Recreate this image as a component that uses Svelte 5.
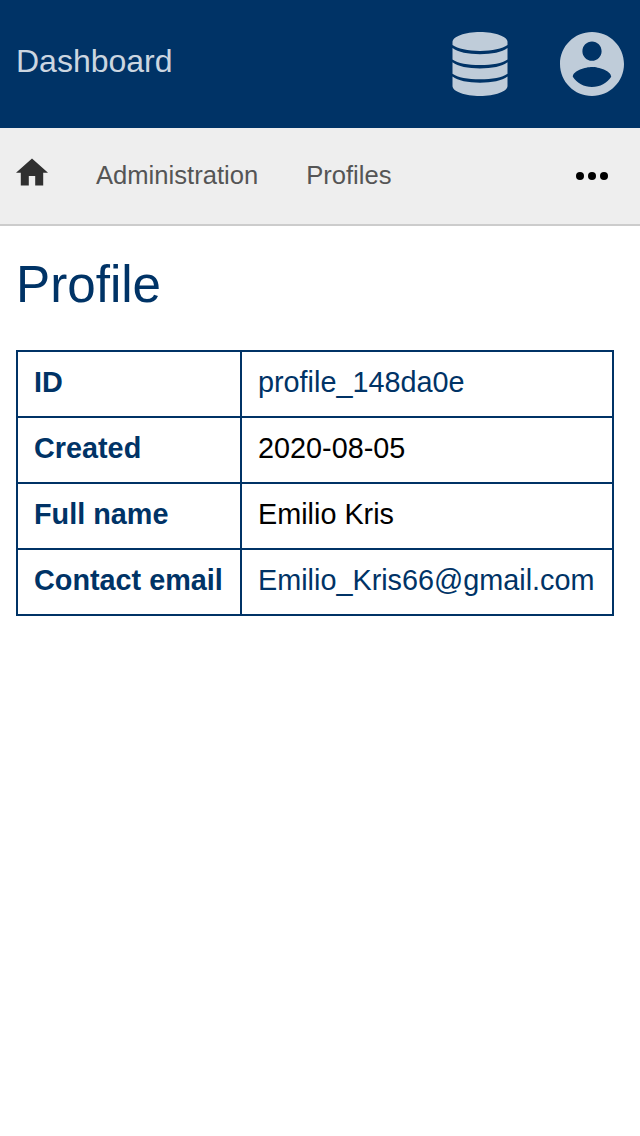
<script>
  const crumbs = ['Administration', 'Profiles'];
  const rows = [
    { label: 'ID', value: 'profile_148da0e', link: true },
    { label: 'Created', value: '2020-08-05' },
    { label: 'Full name', value: 'Emilio Kris' },
    { label: 'Contact email', value: 'Emilio_Kris66@gmail.com', link: true }
  ];
</script>

<header>
  <span class="brand">Dashboard</span>
  <div class="tools">
    <svg width="64" height="64" viewBox="0 0 64 64" aria-hidden="true">
      <path d="M4.500 10C4.500 4.500 17 0 32 0s27.500 4.500 27.500 10v3C54.500 16.800 44 18.900 32 18.900S9.500 16.800 4.500 13z" />
      <path d="M4.500 16C10 20.300 20 22.200 32 22.200s22-1.900 27.500-6.200v11.400C54.500 31.100 44 33 32 33S9.500 31.100 4.500 27.400z" />
      <path d="M4.500 30.300C10 34.600 20 36.500 32 36.500s22-1.900 27.500-6.200v11.400C54.500 45.400 44 47.300 32 47.300S9.500 45.400 4.500 41.700z" />
      <path d="M4.500 44.600C10 48.900 20 50.800 32 50.800s22-1.900 27.500-6.200V54C59.500 59.500 47 64 32 64S4.500 59.500 4.500 54z" />
    </svg>
    <svg width="64" height="64" viewBox="2 2 20 20" aria-hidden="true">
      <path d="M12 2C6.480 2 2 6.480 2 12s4.480 10 10 10 10-4.480 10-10S17.520 2 12 2zm0 3c1.660 0 3 1.340 3 3s-1.340 3-3 3-3-1.340-3-3 1.340-3 3-3zm0 14.200c-2.500 0-4.710-1.280-6-3.220.030-1.990 4-3.080 6-3.080 1.990 0 5.970 1.090 6 3.080-1.290 1.940-3.500 3.220-6 3.220z" />
    </svg>
  </div>
</header>

<nav>
  <svg class="home" width="32" height="28" viewBox="2 2.750 20 17.500" aria-hidden="true">
    <path d="M10 20v-6h4v6h5v-8h3L12 3 2 12h3v8z" />
  </svg>
  {#each crumbs as crumb}
    <span>{crumb}</span>
  {/each}
  <svg class="more" width="32" height="8" viewBox="0 0 32 8" aria-hidden="true">
    <circle cx="4" cy="4" r="4" />
    <circle cx="16" cy="4" r="4" />
    <circle cx="28" cy="4" r="4" />
  </svg>
</nav>

<main>
  <h1>Profile</h1>
  <table>
    <tbody>
      {#each rows as row}
        <tr>
          <th>{row.label}</th>
          <td class:link={row.link}>{row.value}</td>
        </tr>
      {/each}
    </tbody>
  </table>
</main>

<style>
  :global(body) {
    background: #fff;
    font-family: 'Liberation Sans', Arial, sans-serif;
    font-size: 32px;
  }
  header {
    box-sizing: border-box;
    height: 128px;
    padding: 0 16px;
    display: flex;
    align-items: center;
    justify-content: space-between;
    background: #003366;
  }
  .brand {
    color: #ccd6e0;
    line-height: 36px;
    padding-bottom: 6px;
  }
  .tools {
    display: flex;
    gap: 48px;
    fill: #bfccd9;
  }
  nav {
    box-sizing: border-box;
    height: 98px;
    padding: 0 32px 0 16px;
    display: flex;
    align-items: center;
    gap: 48px;
    background: #eee;
    border-bottom: 2px solid #ccc;
    color: #555;
    font-size: 25.6px;
  }
  nav span {
    line-height: 28px;
    padding-bottom: 2px;
  }
  .home {
    fill: #303030;
    margin-bottom: 8px;
  }
  .more {
    margin-left: auto;
  }
  main {
    padding: 30px 16px;
  }
  h1 {
    margin: 0 0 36px;
    font-size: 51.2px;
    font-weight: 400;
    line-height: 58px;
    color: #003366;
  }
  table {
    border-collapse: collapse;
    width: 598px;
    table-layout: fixed;
    font-size: 28.8px;
    line-height: 32px;
  }
  th,
  td {
    box-sizing: border-box;
    height: 66px;
    padding: 14px 0 18px 16px;
    border: 2px solid #003366;
    text-align: left;
    white-space: nowrap;
  }
  th {
    width: 224px;
    color: #003366;
  }
  .link {
    color: #003366;
  }
</style>
